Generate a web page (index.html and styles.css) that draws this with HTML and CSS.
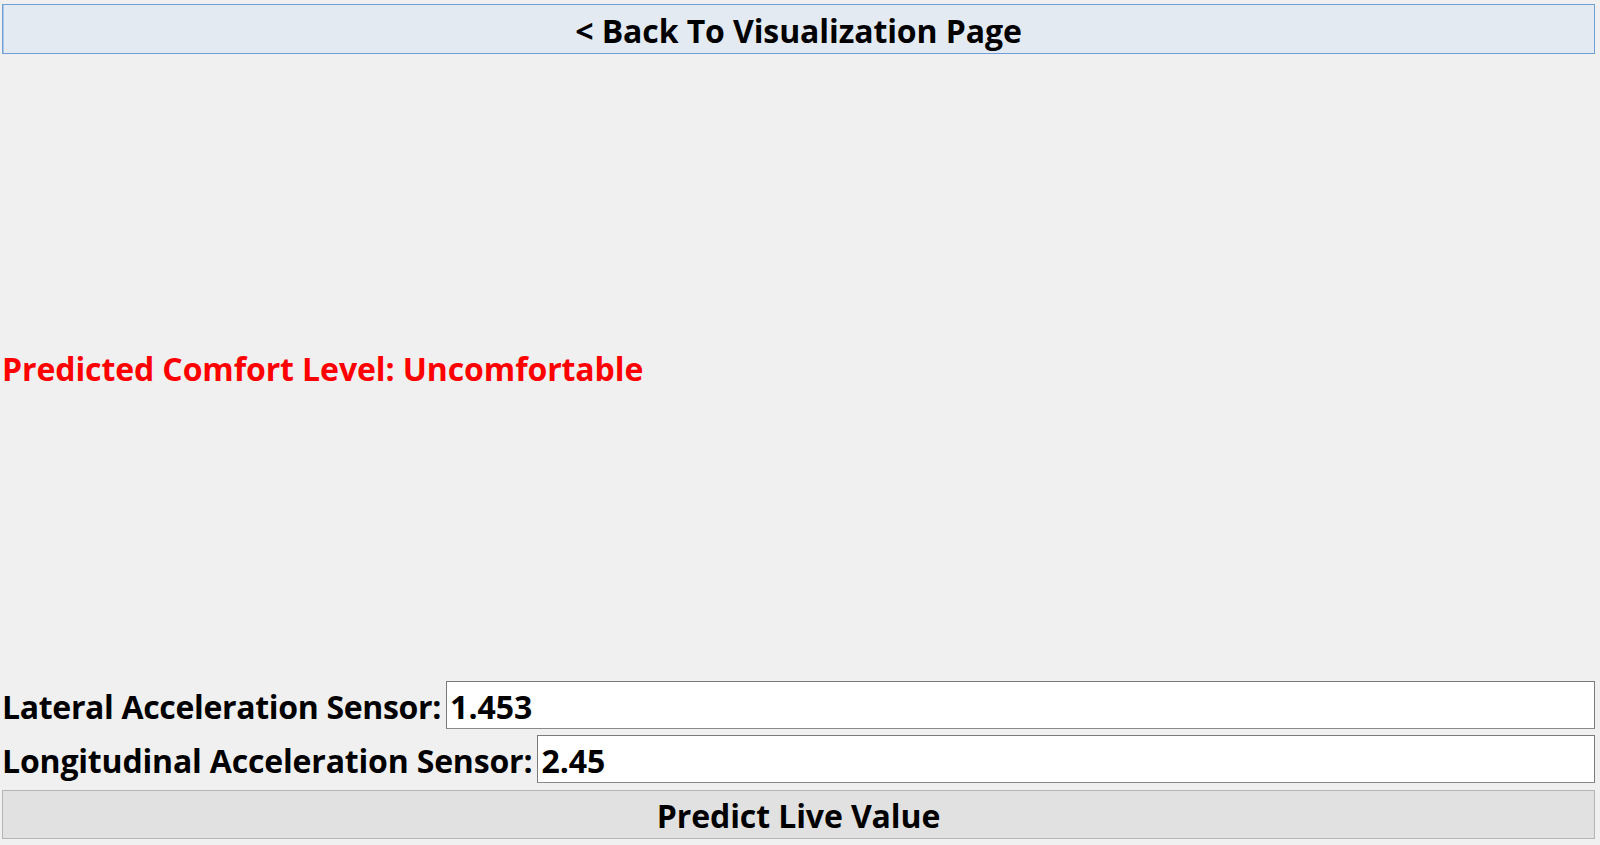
FILE: index.html
```html
<!DOCTYPE html>
<html>
<head>
<meta charset="utf-8">
<link rel="stylesheet" href="styles.css">
</head>
<body>
<div class="app">
  <button class="btn btn-back">&lt; Back To Visualization Page</button>
  <div class="result-area">
    <div class="result">Predicted Comfort Level: Uncomfortable</div>
  </div>
  <div class="row">
    <label class="label">Lateral Acceleration Sensor:</label>
    <div class="field">1.453</div>
  </div>
  <div class="row">
    <label class="label label-long">Longitudinal Acceleration Sensor:</label>
    <div class="field">2.45</div>
  </div>
  <button class="btn btn-predict">Predict Live Value</button>
</div>
</body>
</html>
```

FILE: styles.css
```css
html, body {
  margin: 0;
  padding: 0;
  background: #f0f0f0;
  height: 100%;
  overflow: hidden;
}
.app {
  height: 845px;
  display: flex;
  flex-direction: column;
  padding: 4px 5px 6px 2px;
  box-sizing: border-box;
  font-family: "Open Sans", "Noto Sans", sans-serif;
  font-weight: 700;
  font-size: 32px;
  color: #000;
}
.btn {
  font: inherit;
  color: #000;
  height: 50px;
  width: 100%;
  margin: 0;
  padding: 2px 0 0;
  box-sizing: border-box;
  display: flex;
  align-items: center;
  justify-content: center;
  letter-spacing: -0.1px;
}
.btn-back {
  background: #e3eaf2;
  border: 1px solid #6f9fd6;
  box-shadow: inset 1px 0 0 #a9c6e6;
}
.btn-predict {
  background: #e1e1e1;
  border: 1px solid #b4b4b4;
  height: 49px;
  margin-top: 1px;
}
.result-area {
  flex: 1;
  display: flex;
  align-items: center;
}
.result {
  color: #ff0000;
  line-height: 1;
  letter-spacing: -0.1px;
  padding-top: 2px;
}
.row {
  display: flex;
  align-items: center;
  height: 48px;
  margin-bottom: 6px;
}
.label {
  white-space: nowrap;
  padding-right: 5px;
  padding-top: 2px;
  letter-spacing: -0.33px;
}
.label-long {
  letter-spacing: -0.18px;
}
.field {
  flex: 1;
  height: 48px;
  box-sizing: border-box;
  background: #fff;
  border: 1px solid #7a7a7a;
  border-bottom-color: #8a8a8a;
  display: flex;
  align-items: center;
  padding: 2px 0 0 3px;
}
```
